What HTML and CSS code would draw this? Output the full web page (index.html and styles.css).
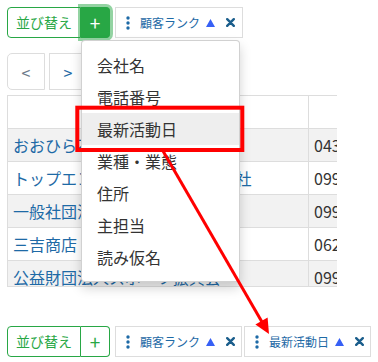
FILE: index.html
```html
<!DOCTYPE html>
<html lang="ja">
<head>
<meta charset="utf-8">
<link rel="stylesheet" href="styles.css">
</head>
<body>
<div class="page">
  <div class="toolbar">
    <div class="btn-group">
      <button class="btn btn-sort">並び替え</button>
      <button class="btn btn-add is-active">+</button>
    </div>
    <div class="chip">
      <svg class="ico-dots" width="4" height="14" viewBox="0 0 4 14"><circle cx="2" cy="2" r="1.7"/><circle cx="2" cy="7" r="1.7"/><circle cx="2" cy="12" r="1.7"/></svg>
      <span class="chip-label">顧客ランク</span>
      <svg class="ico-up" width="9" height="8" viewBox="0 0 9 8"><path d="M4.5 0L9 8H0Z"/></svg>
      <svg class="ico-x" width="9" height="9" viewBox="0 0 9 9"><path d="M1.2 1.2L7.8 7.8M7.8 1.2L1.2 7.8"/></svg>
    </div>
    <div class="menu">
      <div class="menu-item">会社名</div>
      <div class="menu-item">電話番号</div>
      <div class="menu-item is-hover">最新活動日</div>
      <div class="menu-item">業種・業態</div>
      <div class="menu-item">住所</div>
      <div class="menu-item">主担当</div>
      <div class="menu-item">読み仮名</div>
    </div>
  </div>

  <div class="pager">
    <button class="pg pg-prev">&lt;</button>
    <button class="pg pg-next">&gt;</button>
  </div>

  <div class="table-wrap">
    <table class="grid">
      <colgroup><col class="c1"><col class="c2"></colgroup>
      <tr class="head"><td></td><td></td></tr>
      <tr class="odd"><td class="name">おおひら不動産</td><td class="tel">043-221-4410</td></tr>
      <tr><td class="name">トップエンタープライズ株式会社</td><td class="tel">099-224-1180</td></tr>
      <tr class="odd"><td class="name">一般社団法人九州観光</td><td class="tel">099-812-3301</td></tr>
      <tr><td class="name">三吉商店</td><td class="tel">062-554-0091</td></tr>
      <tr class="odd"><td class="name">公益財団法人スポーツ振興会</td><td class="tel">099-255-7720</td></tr>
    </table>
  </div>

  <div class="toolbar bottom">
    <div class="btn-group">
      <button class="btn btn-sort">並び替え</button>
      <button class="btn btn-add">+</button>
    </div>
    <div class="chip">
      <svg class="ico-dots" width="4" height="14" viewBox="0 0 4 14"><circle cx="2" cy="2" r="1.7"/><circle cx="2" cy="7" r="1.7"/><circle cx="2" cy="12" r="1.7"/></svg>
      <span class="chip-label">顧客ランク</span>
      <svg class="ico-up" width="9" height="8" viewBox="0 0 9 8"><path d="M4.5 0L9 8H0Z"/></svg>
      <svg class="ico-x" width="9" height="9" viewBox="0 0 9 9"><path d="M1.2 1.2L7.8 7.8M7.8 1.2L1.2 7.8"/></svg>
    </div>
    <div class="chip chip-next">
      <svg class="ico-dots" width="4" height="14" viewBox="0 0 4 14"><circle cx="2" cy="2" r="1.7"/><circle cx="2" cy="7" r="1.7"/><circle cx="2" cy="12" r="1.7"/></svg>
      <span class="chip-label">最新活動日</span>
      <svg class="ico-up" width="9" height="8" viewBox="0 0 9 8"><path d="M4.5 0L9 8H0Z"/></svg>
      <svg class="ico-x" width="9" height="9" viewBox="0 0 9 9"><path d="M1.2 1.2L7.8 7.8M7.8 1.2L1.2 7.8"/></svg>
    </div>
  </div>

  <svg class="annot" width="378" height="362" viewBox="0 0 378 362">
    <rect x="77.3" y="107.7" width="165" height="42.3" fill="none" stroke="#ff0000" stroke-width="4"/>
    <line x1="163" y1="151" x2="262" y2="322" stroke="#ff0000" stroke-width="3"/>
    <polygon points="269,334 255.4,324.5 267.6,317.5" fill="#ff0000"/>
  </svg>
</div>
</body>
</html>
```

FILE: styles.css
```css
html, body {
  margin: 0;
  padding: 0;
  background: #fff;
}
body {
  font-family: "Noto Sans CJK JP", "Noto Sans", sans-serif;
  color: #333;
}
.page {
  position: relative;
  width: 378px;
  height: 362px;
  box-sizing: border-box;
  padding: 7px;
  overflow: hidden;
}
.toolbar {
  position: relative;
  display: flex;
  align-items: flex-start;
  height: 31px;
}
.toolbar.bottom {
  margin-top: 39px;
}
.btn-group {
  display: flex;
  height: 31px;
}
.btn {
  font-family: inherit;
  font-size: 14px;
  height: 31px;
  box-sizing: border-box;
  border: 1px solid #28a745;
  background: #fff;
  color: #28a745;
  padding: 0;
  line-height: 29px;
  margin: 0;
}
.btn-sort {
  width: 74px;
  border-radius: 4px 0 0 4px;
}
.btn-add {
  width: 29px;
  border-left: 0;
  border-radius: 0 4px 4px 0;
  font-size: 19px;
  line-height: 28px;
}
.btn-add.is-active {
  background: #28a745;
  border-color: #28a745;
  color: #fff;
  box-shadow: 0 0 0 3px rgba(40, 167, 69, 0.5);
  position: relative;
}
.chip {
  display: flex;
  align-items: center;
  width: 128px;
  height: 31px;
  box-sizing: border-box;
  border: 1px solid #ddd;
  padding: 0 0 0 10px;
  margin-left: 5px;
  font-size: 12px;
  color: #1e6aa6;
}
.chip-next {
  margin-left: 2px;
}
.ico-dots {
  fill: #1e6aa6;
  flex: none;
}
.chip-label {
  margin-left: 10px;
  white-space: nowrap;
}
.ico-up {
  fill: #3760f5;
  margin-left: 6px;
  flex: none;
}
.ico-x {
  stroke: #1b5e8c;
  stroke-width: 2.4;
  stroke-linecap: round;
  fill: none;
  margin-left: 11px;
  flex: none;
}
.menu {
  position: absolute;
  left: 74px;
  top: 33px;
  width: 159px;
  box-sizing: border-box;
  background: #fff;
  border: 1px solid rgba(0, 0, 0, 0.18);
  border-radius: 4px;
  box-shadow: 0 6px 12px rgba(0, 0, 0, 0.175);
  padding: 8px 0;
  z-index: 10;
}
.menu-item {
  height: 32px;
  line-height: 32px;
  padding: 0 15px;
  font-size: 16px;
  color: #333;
  white-space: nowrap;
}
.menu-item.is-hover {
  background: #eee;
}
.pager {
  display: flex;
  gap: 4px;
  margin-top: 15px;
}
.pg {
  width: 38px;
  height: 37px;
  box-sizing: border-box;
  border: 1px solid #ddd;
  background: #fff;
  font-family: inherit;
  font-size: 16px;
  padding: 0;
  margin: 0;
}
.pg-prev {
  border-radius: 5px 0 0 5px;
  color: #6d7b8a;
}
.pg-next {
  color: #1e6aa6;
}
.table-wrap {
  margin-top: 5px;
  width: 330px;
  height: 192px;
  box-sizing: border-box;
  overflow: hidden;
  border-bottom: 1px solid #ddd;
}
.grid {
  border-collapse: collapse;
  table-layout: fixed;
  width: 421px;
}
.grid .c1 { width: 301px; }
.grid .c2 { width: 120px; }
.grid td {
  height: 32px;
  padding: 0 5px;
  border: 1px solid #ddd;
  font-size: 16px;
  white-space: nowrap;
  overflow: hidden;
  vertical-align: middle;
}
.grid tr.odd td {
  background: #f2f2f2;
}
.grid td.name {
  color: #1e6aa6;
}
.grid td.tel {
  color: #333;
}
.annot {
  position: absolute;
  left: 0;
  top: 0;
  pointer-events: none;
  z-index: 20;
}
```
